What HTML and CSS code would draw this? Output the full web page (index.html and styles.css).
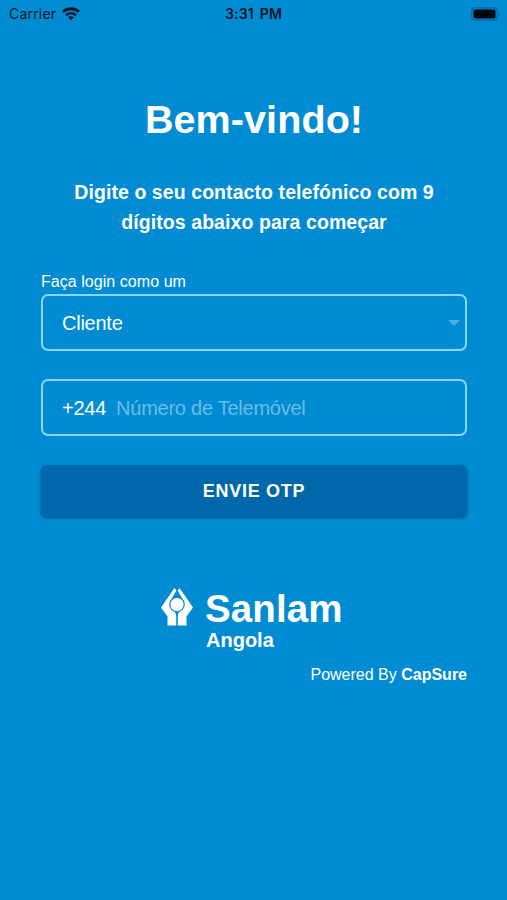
FILE: index.html
```html
<!DOCTYPE html>
<html lang="pt">
<head>
<meta charset="utf-8">
<title>Bem-vindo</title>
<link rel="stylesheet" href="styles.css">
</head>
<body>
<header class="status">
  <div class="status-left">
    <span>Carrier</span>
    <svg class="wifi" viewBox="0 0 18 14" width="18" height="14">
      <path d="M1 4.800C5.500.7 12.500.7 17 4.800" fill="none" stroke="#001827" stroke-width="2.800"/>
      <path d="M4 8.300C7 5.600 11 5.600 14 8.300" fill="none" stroke="#001827" stroke-width="2.400"/>
      <path d="M9 13.300L6.100 10.300C7.700 8.900 10.300 8.900 11.900 10.300Z" fill="#001827"/>
    </svg>
  </div>
  <div class="clock">3:31 PM</div>
  <div class="status-right">
    <svg viewBox="0 0 30 14" width="30" height="14">
      <rect x=".8" y=".8" width="25.400" height="12.400" rx="3.500" fill="none" stroke="#056296" stroke-width="1.200"/>
      <rect x="2.500" y="2.500" width="22" height="9" rx="1.800" fill="#00090f"/>
      <path d="M27.500 5Q29.500 7 27.500 9Z" fill="#056296"/>
    </svg>
  </div>
</header>
<main class="login">
  <h1 class="title">Bem-vindo!</h1>
  <p class="intro">Digite o seu contacto telefónico com 9<br>dígitos abaixo para começar</p>
  <div class="label">Faça login como um</div>
  <div class="field">
    <span class="value">Cliente</span>
    <svg class="caret" viewBox="0 0 12 6" width="12" height="6"><path d="M0 0H12L6 6Z" fill="#4db0df"/></svg>
  </div>
  <div class="field phone">
    <span class="prefix">+244</span>
    <span class="placeholder">Número de Telemóvel</span>
  </div>
  <button class="submit">ENVIE OTP</button>
  <div class="brand">
    <svg class="mark" viewBox="0 0 32 38" width="32" height="38" fill="#fff">
      <path d="M13.500 0L15.400 2.600L9 13.500C8 22 15.200 21.500 15.200 28V37.500H6.500V28.500L0 19.500Z"/>
      <path d="M18.500 0L16.600 2.600L23 13.500C24 22 16.800 21.500 16.800 28V37.500H25.500V28.500L32 19.500Z"/>
      <circle cx="16" cy="16.500" r="7.200" stroke="#008bd3" stroke-width="1.200"/>
    </svg>
    <div class="brand-text">
      <div class="brand-name">Sanlam</div>
      <div class="brand-country">Angola</div>
    </div>
  </div>
  <div class="powered">Powered By <b>CapSure</b></div>
</main>
</body>
</html>
```
FILE: styles.css
```css
* { box-sizing: border-box; }
body {
  margin: 0;
  height: 900px;
  background: #008bd3;
  color: #fff;
  font-family: "Liberation Sans", Arial, sans-serif;
  overflow: hidden;
}
.status {
  display: grid;
  grid-template-columns: 1fr auto 1fr;
  align-items: center;
  height: 27px;
  padding: 0 6px 0 8px;
  color: #001827;
  font-family: Inter, sans-serif;
  font-size: 14px;
  line-height: 27px;
}
.status-left { display: flex; align-items: center; gap: 6px; padding-left: 1px; letter-spacing: .2px; }
.status-right { display: flex; justify-content: flex-end; }
.clock { margin-right: 2px; font-weight: 600; letter-spacing: .2px; word-spacing: 2px; }
.login { display: flex; flex-direction: column; padding: 0 40px 0 41px; }
.title {
  margin: 69px 0 0;
  height: 47px;
  line-height: 46px;
  font-size: 39.500px;
  letter-spacing: .1px;
  text-align: center;
}
.intro {
  margin: 34px 0 0;
  line-height: 30px;
  font-size: 19.500px;
  font-weight: 700;
  letter-spacing: .080px;
  text-align: center;
  white-space: nowrap;
}
.label { margin-top: 35px; height: 22px; line-height: 20px; font-size: 16px; letter-spacing: .050px; }
.field {
  display: flex;
  align-items: center;
  height: 57px;
  padding: 1px 5px 0 19px;
  border: 2px solid #8fd4fa;
  border-radius: 7px;
  font-size: 20px;
  letter-spacing: -.25px;
}
.value { flex: 1; }
.phone { margin-top: 28px; gap: 10px; }
.placeholder { color: #68bee9; }
.submit {
  height: 52px;
  margin-top: 29px;
  padding: 0;
  border: 0;
  border-radius: 6px;
  background: #0067aa;
  box-shadow: 0 1px 3px rgba(0, 45, 85, .65);
  color: #fff;
  font: 700 18px "Liberation Sans", Arial, sans-serif;
  letter-spacing: .7px;
}
.brand { display: flex; gap: 12px; height: 67px; margin: 71px 0 0 120px; }
.brand-text { padding-top: 2px; }
.brand-name { height: 38px; line-height: 38px; font-size: 38.500px; font-weight: 700; letter-spacing: .1px; }
.brand-country { line-height: 24px; padding-left: 1px; font-size: 20px; font-weight: 700; }
.powered { margin-top: 10px; line-height: 20px; font-size: 16px; text-align: right; }
```
